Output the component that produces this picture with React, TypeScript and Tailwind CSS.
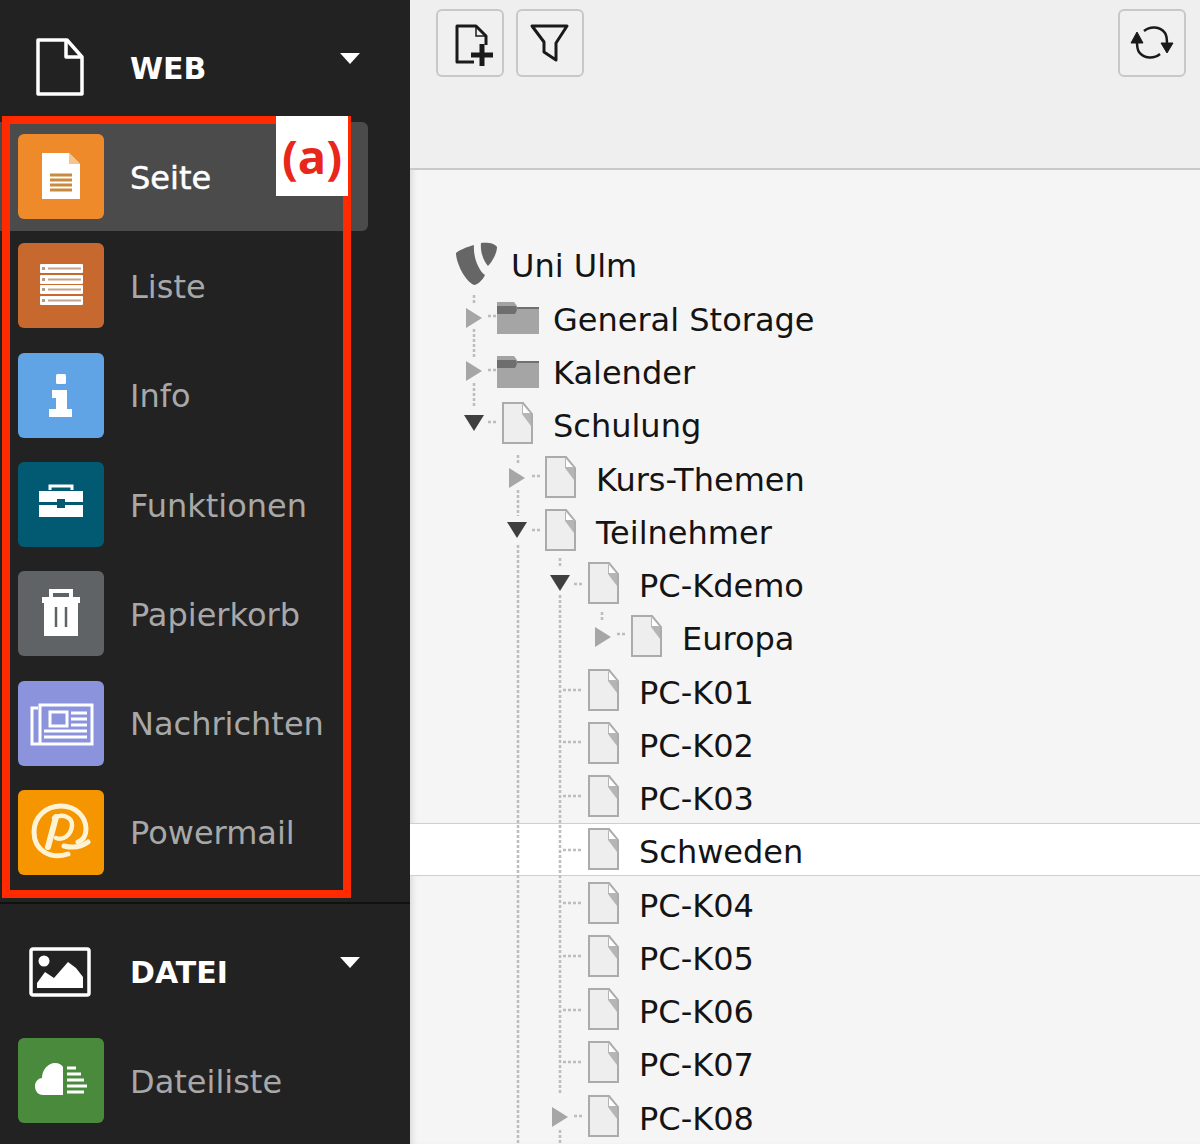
const lineFrom = (paths: string[]) => paths.join(" ");

function HeadPage() {
  return (
    <svg width="50" height="58" viewBox="0 0 50 58" fill="none" stroke="#fff" strokeWidth="3.5" strokeLinejoin="round" className="mb-[3px] mr-[2px]">
      <path d="M3 2 H32 L47 19 V56 H3 Z" />
      <path d="M31 3 V19 H46" />
    </svg>
  );
}

function HeadImage() {
  return (
    <svg width="62" height="50" viewBox="0 0 62 50" className="mr-[2px]">
      <rect x="2" y="2" width="58" height="46" rx="2" fill="none" stroke="#fff" strokeWidth="3.5" />
      <circle cx="15" cy="14" r="5.5" fill="#fff" />
      <path d="M8 41 V36 L16 25 L25 31 L39 15 L47 21 L54 30 V41 Z" fill="#fff" />
    </svg>
  );
}

function Caret() {
  return (
    <svg width="20" height="12" viewBox="0 0 20 12" className="mb-[18px]">
      <path d="M0 0 H20 L10 11 Z" fill="#fff" />
    </svg>
  );
}

const iconPage = (
  <svg width="86" height="86" viewBox="0 0 86 86">
    <path d="M24 19 H51 L62 30 V65 H24 Z" fill="#fff" />
    <path d="M51 19 L62 30 H51 Z" fill="#f6c58f" />
    <path d="M32 41 H54 M32 46 H54 M32 51 H54 M32 56 H54" stroke="#c88a3e" strokeWidth="3" />
  </svg>
);

const iconList = (
  <svg width="86" height="86" viewBox="0 0 86 86">
    {[21, 32, 42, 53].map((y) => (
      <g key={y}>
        <rect x="22" y={y} width="43" height="9" rx="1" fill="#fff" />
        <path d={`M30 ${y + 4.5} H63`} stroke="#c4a48c" strokeWidth="2" />
        <rect x="24" y={y + 3} width="3" height="3" fill="#b59a86" />
      </g>
    ))}
  </svg>
);

const iconInfo = (
  <svg width="86" height="86" viewBox="0 0 86 86">
    <rect x="38" y="21" width="10" height="10" rx="1.5" fill="#fff" />
    <path d="M34 37 H49 V56 H54 V64 H31 V56 H38 V45 H34 Z" fill="#fff" />
  </svg>
);

const iconTool = (
  <svg width="86" height="86" viewBox="0 0 86 86">
    <path d="M32 28 V24 H54 V28" fill="none" stroke="#fff" strokeWidth="3" />
    <path d="M21 29 H65 V40 H47 V37 H39 V40 H21 Z" fill="#fff" />
    <path d="M21 43 H39 V46 H47 V43 H65 V55 H21 Z" fill="#fff" />
  </svg>
);

const iconTrash = (
  <svg width="86" height="86" viewBox="0 0 86 86">
    <path d="M33 27 V20 H53 V27" fill="none" stroke="#fff" strokeWidth="4" />
    <rect x="24" y="26" width="38" height="6" fill="#fff" />
    <path d="M26 32 H60 V65 H26 Z" fill="#fff" />
    <path d="M38 36 V56 M48 36 V56" stroke="#5f6366" strokeWidth="2.5" />
  </svg>
);

const iconNews = (
  <svg width="86" height="86" viewBox="0 0 86 86" fill="none" stroke="#fff">
    <path d="M20 27 H14 V63 H74 V24 H22 V62" strokeWidth="3" />
    <rect x="32" y="31" width="17" height="14" strokeWidth="3" />
    <path d="M53 32 H69 M53 38 H69 M53 44 H69 M26 50 H69 M26 56 H69" strokeWidth="3" />
  </svg>
);

const iconPower = (
  <svg width="86" height="86" viewBox="0 0 86 86" fill="none" stroke="#fff3d6" strokeLinecap="round">
    <path d="M50 64 C32 70 16 60 16 42 C16 26 29 16 43 16 C58 16 68 27 68 39 C68 46 65 50 60 52" strokeWidth="5" />
    <path d="M30 57 L38 27" strokeWidth="6" />
    <path d="M36 28 C44 23 55 27 54 36 C53 45 45 51 38 48" strokeWidth="4.5" />
    <path d="M46 56 C54 58 62 58 70 52" strokeWidth="5" />
  </svg>
);

const iconCloud = (
  <svg width="86" height="86" viewBox="0 0 86 86">
    <path d="M45 57 H25 C20 57 17 53 17 48 C17 43 21 40 24 40 C24 32 30 25 37 25 C41 25 44 27 45 29 Z" fill="#fff" />
    <path d="M49 30 H58 M49 36 H63 M49 42 H66 M49 48 H69 M49 54 H66" stroke="#fff" strokeWidth="3" />
  </svg>
);

function ModuleRow({ color, icon, label, active }: { color: string; icon: React.ReactNode; label: string; active?: boolean }) {
  return (
    <div className={`flex h-[109.3px] w-[368px] items-center rounded-r-md pl-[18px] ${active ? "bg-[#4b4b4b]" : ""}`}>
      <div className={`h-[85px] w-[86px] rounded-md ${color}`}>{icon}</div>
      <span className={`ml-[26px] mt-[2px] text-[32px] ${active ? "text-white [-webkit-text-stroke:0.5px_white]" : "text-[#a8a8a8]"}`}>{label}</span>
    </div>
  );
}

function ModuleHeader({ icon, label }: { icon: React.ReactNode; label: string }) {
  return (
    <div className="flex h-[122px] w-[368px] items-center pr-[8px] pt-[14px]">
      <div className="flex w-[122px] justify-center">{icon}</div>
      <span className="ml-[8px] text-[30px] font-bold text-white">{label}</span>
      <span className="ml-auto flex items-center"><Caret /></span>
    </div>
  );
}

function PageIcon() {
  return (
    <svg width="31" height="42" viewBox="0 0 31 42">
      <path d="M1 1 H21 L30 12 V41 H1 Z" fill="#eeeeee" stroke="#ababab" strokeWidth="2" />
      <path d="M20 2 L29 12 V24 L20 12 Z" fill="#b5b5b5" />
      <path d="M21 3 L28 11 H21 Z" fill="#fff" />
    </svg>
  );
}

function FolderIcon() {
  return (
    <svg width="43" height="32" viewBox="0 0 43 32" className="mt-[3px]">
      <path d="M1 0 H18 L21 4 V10 H1 Z" fill="#a3a3a3" />
      <rect x="1" y="5" width="42" height="27" fill="#a5a5a5" />
      <path d="M21 5 H43 V7 H21 Z" fill="#707070" />
      <path d="M1 4 H20 L21 8 L19 12 H1 Z" fill="#6e6e6e" />
    </svg>
  );
}

function Toggle({ kind }: { kind?: "open" | "closed" }) {
  if (kind === "open") {
    return (
      <svg width="22" height="16" viewBox="0 0 22 16">
        <path d="M1 0 H21 L11 16 Z" fill="#3f3f3f" />
      </svg>
    );
  }
  if (kind === "closed") {
    return (
      <svg width="22" height="20" viewBox="0 0 22 20" className="mt-[2px]">
        <path d="M3 0 L19 10 L3 20 Z" fill="#a6a6a6" />
      </svg>
    );
  }
  return null;
}

type TreeRow = { label: string; level: 0 | 1 | 2 | 3; toggle?: "open" | "closed"; folder?: boolean; hover?: boolean };

const rows: TreeRow[] = [
  { label: "General Storage", level: 0, toggle: "closed", folder: true },
  { label: "Kalender", level: 0, toggle: "closed", folder: true },
  { label: "Schulung", level: 0, toggle: "open" },
  { label: "Kurs-Themen", level: 1, toggle: "closed" },
  { label: "Teilnehmer", level: 1, toggle: "open" },
  { label: "PC-Kdemo", level: 2, toggle: "open" },
  { label: "Europa", level: 3, toggle: "closed" },
  { label: "PC-K01", level: 2 },
  { label: "PC-K02", level: 2 },
  { label: "PC-K03", level: 2 },
  { label: "Schweden", level: 2, hover: true },
  { label: "PC-K04", level: 2 },
  { label: "PC-K05", level: 2 },
  { label: "PC-K06", level: 2 },
  { label: "PC-K07", level: 2 },
  { label: "PC-K08", level: 2, toggle: "closed" },
];

const indent = ["pl-[53px]", "pl-[96px]", "pl-[139px]", "pl-[182px]"];

function Row({ row }: { row: TreeRow }) {
  return (
    <div
      className={`flex h-[53.25px] items-center ${indent[row.level]} ${
        row.hover ? "bg-white shadow-[inset_0_1px_0_#cfcfcf,inset_0_-1px_0_#cfcfcf]" : ""
      }`}
    >
      <div className="flex w-[33px] items-center"><Toggle kind={row.toggle} /></div>
      <div className="flex h-[44px] w-[43px] items-center justify-center">
        {row.folder ? <FolderIcon /> : <PageIcon />}
      </div>
      <span className="ml-[14px] mt-[6px] text-[32px] text-[#141414]">{row.label}</span>
    </div>
  );
}

function TypoLogo() {
  return (
    <svg width="42" height="43" viewBox="0 0 42 43" fill="#666">
      <path d="M26 1 C32 0 40 1 42 5 C42 12 36 21 33 24 C29 20 25 10 26 1 Z" />
      <path d="M19 3 C12 5 4 8 1 11 C1 20 9 38 19 43 C22 43 28 38 30 33 C23 28 18 14 19 3 Z" />
    </svg>
  );
}

const guides = lineFrom([
  "M474 295 V305 M474 329 V358 M474 383 V408",
  "M518 455 V465 M518 490 V516 M518 545 V1144",
  "M560 558 V568 M560 595 V1094 M560 1130 V1144",
  "M602 612 V622",
  "M488 316 H498 M488 370 H498 M488 422 H498",
  "M532 476 H541 M532 530 H541",
  "M574 584 H583 M574 1116 H583",
  "M617 634 H626",
  "M563 690 H582 M563 742 H582 M563 796 H582 M563 850 H582 M563 903 H582 M563 956 H582 M563 1010 H582 M563 1062 H582",
]);

export default function App() {
  return (
    <div className="relative flex h-[1144px] w-[1200px] overflow-hidden font-['DejaVu_Sans',sans-serif]">
      <aside className="w-[410px] shrink-0 bg-[#222222]">
        <ModuleHeader icon={<HeadPage />} label="WEB" />
        <ModuleRow active color="bg-[#ef8a2b]" icon={iconPage} label="Seite" />
        <ModuleRow color="bg-[#c7682f]" icon={iconList} label="Liste" />
        <ModuleRow color="bg-[#60a4e6]" icon={iconInfo} label="Info" />
        <ModuleRow color="bg-[#015a72]" icon={iconTool} label="Funktionen" />
        <ModuleRow color="bg-[#5f6366]" icon={iconTrash} label="Papierkorb" />
        <ModuleRow color="bg-[#8b93dc]" icon={iconNews} label="Nachrichten" />
        <ModuleRow color="bg-[#f59500]" icon={iconPower} label="Powermail" />
        <div className="mt-[15px] h-[2px] bg-[#111111]" />
        <ModuleHeader icon={<HeadImage />} label="DATEI" />
        <ModuleRow color="bg-[#4a8a3c]" icon={iconCloud} label="Dateiliste" />
      </aside>

      <main className="relative flex-1 bg-[#f5f5f5] shadow-[inset_6px_0_6px_-4px_rgba(0,0,0,0.12)]">
        <div className="flex h-[170px] gap-[12px] border-b-2 border-[#c9c9c9] bg-[#efefef] pl-[26px] pr-[14px] pt-[9px]">
          <button className="flex h-[68px] w-[68px] items-center justify-center rounded-md border-2 border-[#c8c8c8] bg-[#f0f0f0]">
            <svg width="64" height="64" viewBox="0 0 64 64" fill="none" stroke="#1a1a1a">
              <path d="M36 51 H19 V15 H38 L48 25 V34" strokeWidth="3" strokeLinejoin="round" />
              <path d="M38 16 V25 H47" strokeWidth="1.5" />
              <path d="M44 33 V55 M33 44 H55" strokeWidth="5" />
            </svg>
          </button>
          <button className="flex h-[68px] w-[68px] items-center justify-center rounded-md border-2 border-[#c8c8c8] bg-[#f0f0f0]">
            <svg width="64" height="64" viewBox="0 0 64 64" fill="none" stroke="#1a1a1a" strokeWidth="3" strokeLinejoin="round">
              <path d="M14 15 H49 L38 32 V49 L26 41 V31 Z" />
            </svg>
          </button>
          <button className="ml-auto flex h-[68px] w-[68px] items-center justify-center rounded-md border-2 border-[#c8c8c8] bg-[#f0f0f0]">
            <svg width="64" height="64" viewBox="0 0 64 64" fill="none" stroke="#1a1a1a" strokeWidth="2.5">
              <path d="M24 20 C30 15 40 15 45 22 C47 25 47 28 47 33" />
              <path d="M40 43 C34 48 24 48 19 41 C17 38 17 35 17 31" />
              <path d="M11 32 L17 21 L23 32 Z" fill="#1a1a1a" strokeWidth="1" />
              <path d="M41 32 H53 L47 42 Z" fill="#1a1a1a" strokeWidth="1" />
            </svg>
          </button>
        </div>

        <div className="pt-[67px]">
          <div className="flex h-[53.25px] items-center pl-[45px]">
            <div className="mb-[1px] w-[42px]"><TypoLogo /></div>
            <span className="ml-[14px] mt-[5px] text-[32px] text-[#141414]">Uni Ulm</span>
          </div>
          {rows.map((row) => (
            <Row key={row.label} row={row} />
          ))}
        </div>

        <svg className="absolute left-0 top-0" width="790" height="1144" viewBox="410 0 790 1144" fill="none">
          <path d={guides} stroke="#bdbdbd" strokeWidth="2.5" strokeDasharray="3 2" />
        </svg>
      </main>

      {/* annotation frame over the module list */}
      <div className="absolute left-[2px] top-[116px] h-[782px] w-[349px] border-[8px] border-[#ff2a00]" />
      <div className="absolute left-[276px] top-[116px] flex h-[80px] w-[72px] items-center justify-center bg-white font-['Open_Sans',sans-serif] text-[47px] font-bold text-[#e8261a]">
        (a)
      </div>
    </div>
  );
}
